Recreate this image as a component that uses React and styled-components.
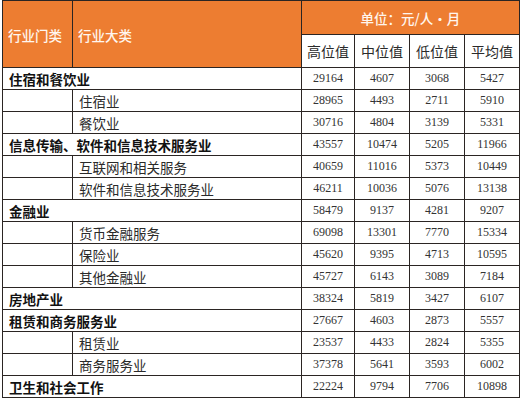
import React from "react";
import styled, { createGlobalStyle } from "styled-components";

const GlobalStyle = createGlobalStyle`
  html, body {
    margin: 0;
    padding: 0;
    background: #fff;
  }
  body {
    font-family: "Noto Sans CJK SC", "Noto Sans", sans-serif;
  }
`;

const Page = styled.div`
  padding: 0 0 0 2px;
  width: 521px;
  height: 401px;
  box-sizing: border-box;
`;

const Grid = styled.div`
  display: grid;
  grid-template-columns: 69px 228px 52px 54px 54px 54px;
  grid-template-rows: 33px 32px repeat(15, 21px);
  gap: 1px;
  padding: 1px;
  background: #2b2523;
  width: 518px;
  box-sizing: border-box;
`;

const Cell = styled.div`
  background: #fff;
  display: flex;
  align-items: center;
  font-size: 13.5px;
  color: #222;
  white-space: nowrap;
  overflow: hidden;
`;

const HeadCell = styled(Cell)`
  background: #ed7d31;
  color: #fff6ee;
  font-size: 13.5px;
  font-weight: 500;
  grid-row: ${(p) => p.$rows || "auto"};
  grid-column: ${(p) => p.$cols || "auto"};
  justify-content: ${(p) => (p.$center ? "center" : "flex-start")};
  padding-left: ${(p) => (p.$center ? "0" : "5px")};
  padding-top: ${(p) => (p.$center ? "1px" : "2px")};
`;

const SubHead = styled(Cell)`
  justify-content: center;
  font-size: 14px;
  color: #2a2a2a;
`;

const NameCell = styled(Cell)`
  padding-left: 6px;
  grid-column: ${(p) => (p.$group ? "span 2" : "auto")};
  font-weight: ${(p) => (p.$group ? 700 : 400)};
  color: ${(p) => (p.$group ? "#111" : "#2a2a2a")};
`;

const NumCell = styled(Cell)`
  justify-content: center;
  font-family: "Liberation Serif", "Times New Roman", serif;
  font-size: 12px;
  color: #333;
`;

const rows = [
  { name: "住宿和餐饮业", group: true, v: [29164, 4607, 3068, 5427] },
  { name: "住宿业", v: [28965, 4493, 2711, 5910] },
  { name: "餐饮业", v: [30716, 4804, 3139, 5331] },
  { name: "信息传输、软件和信息技术服务业", group: true, v: [43557, 10474, 5205, 11966] },
  { name: "互联网和相关服务", v: [40659, 11016, 5373, 10449] },
  { name: "软件和信息技术服务业", v: [46211, 10036, 5076, 13138] },
  { name: "金融业", group: true, v: [58479, 9137, 4281, 9207] },
  { name: "货币金融服务", v: [69098, 13301, 7770, 15334] },
  { name: "保险业", v: [45620, 9395, 4713, 10595] },
  { name: "其他金融业", v: [45727, 6143, 3089, 7184] },
  { name: "房地产业", group: true, v: [38324, 5819, 3427, 6107] },
  { name: "租赁和商务服务业", group: true, v: [27667, 4603, 2873, 5557] },
  { name: "租赁业", v: [23537, 4433, 2824, 5355] },
  { name: "商务服务业", v: [37378, 5641, 3593, 6002] },
  { name: "卫生和社会工作", group: true, v: [22224, 9794, 7706, 10898] },
];

export default function App() {
  return (
    <Page>
      <GlobalStyle />
      <Grid>
        <HeadCell $rows="span 2">行业门类</HeadCell>
        <HeadCell $rows="span 2">行业大类</HeadCell>
        <HeadCell $cols="span 4" $center>
          单位：元/人·月
        </HeadCell>
        <SubHead>高位值</SubHead>
        <SubHead>中位值</SubHead>
        <SubHead>低位值</SubHead>
        <SubHead>平均值</SubHead>
        {rows.map((r) => (
          <React.Fragment key={r.name}>
            {!r.group && <Cell />}
            <NameCell $group={r.group}>{r.name}</NameCell>
            {r.v.map((n, i) => (
              <NumCell key={i}>{n}</NumCell>
            ))}
          </React.Fragment>
        ))}
      </Grid>
    </Page>
  );
}
